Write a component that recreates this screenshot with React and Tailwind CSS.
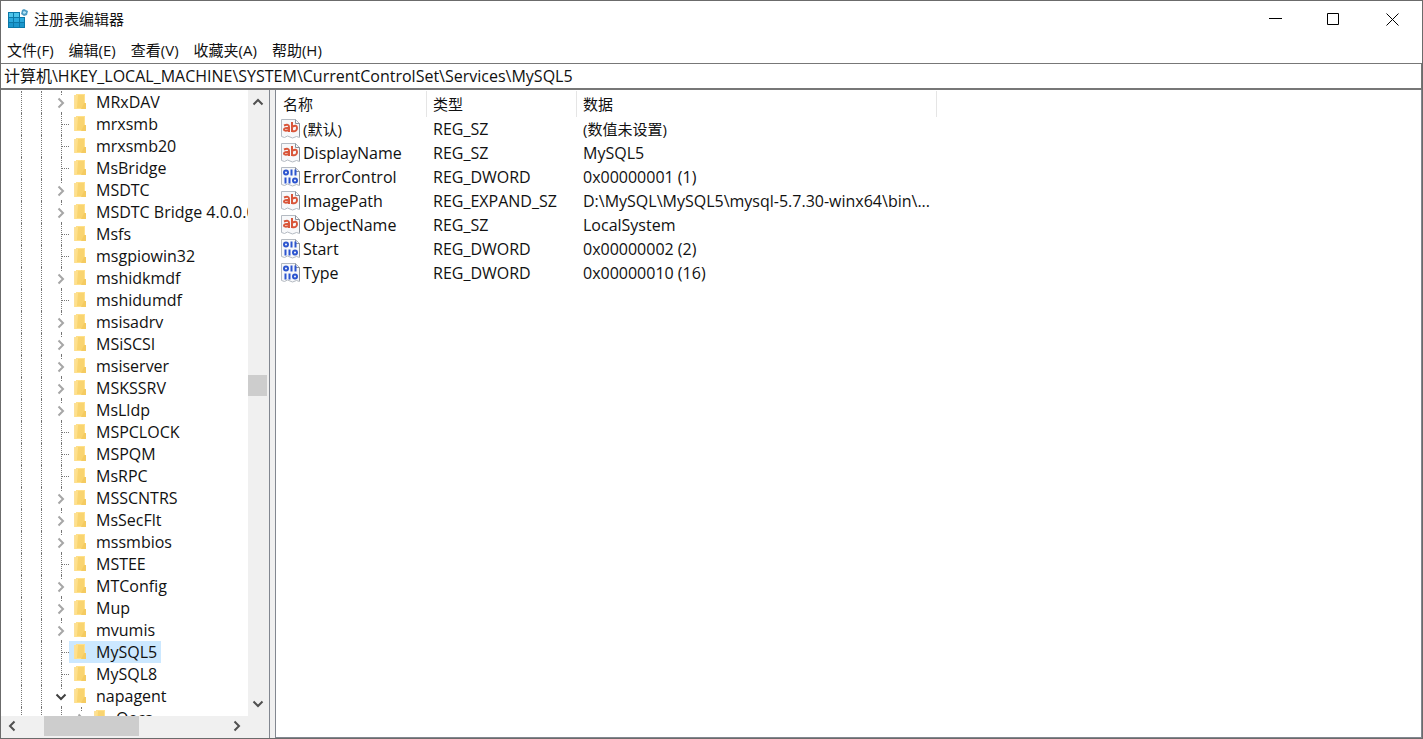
import React, { useState } from 'react';

const services = [
  { name: 'MRxDAV', state: 'closed' },
  { name: 'mrxsmb' },
  { name: 'mrxsmb20' },
  { name: 'MsBridge' },
  { name: 'MSDTC', state: 'closed' },
  { name: 'MSDTC Bridge 4.0.0.0', state: 'closed' },
  { name: 'Msfs' },
  { name: 'msgpiowin32' },
  { name: 'mshidkmdf', state: 'closed' },
  { name: 'mshidumdf' },
  { name: 'msisadrv', state: 'closed' },
  { name: 'MSiSCSI', state: 'closed' },
  { name: 'msiserver', state: 'closed' },
  { name: 'MSKSSRV', state: 'closed' },
  { name: 'MsLldp', state: 'closed' },
  { name: 'MSPCLOCK' },
  { name: 'MSPQM' },
  { name: 'MsRPC' },
  { name: 'MSSCNTRS', state: 'closed' },
  { name: 'MsSecFlt', state: 'closed' },
  { name: 'mssmbios', state: 'closed' },
  { name: 'MSTEE' },
  { name: 'MTConfig', state: 'closed' },
  { name: 'Mup', state: 'closed' },
  { name: 'mvumis', state: 'closed' },
  { name: 'MySQL5' },
  { name: 'MySQL8' },
  { name: 'napagent', state: 'open' },
  { name: 'Qecs', child: true, state: 'closed' },
];

const values = [
  { name: '(默认)', type: 'REG_SZ', data: '(数值未设置)', unset: true },
  { name: 'DisplayName', type: 'REG_SZ', data: 'MySQL5' },
  { name: 'ErrorControl', type: 'REG_DWORD', data: '0x00000001 (1)' },
  { name: 'ImagePath', type: 'REG_EXPAND_SZ', data: 'D:\\MySQL\\MySQL5\\mysql-5.7.30-winx64\\bin\\...' },
  { name: 'ObjectName', type: 'REG_SZ', data: 'LocalSystem' },
  { name: 'Start', type: 'REG_DWORD', data: '0x00000002 (2)' },
  { name: 'Type', type: 'REG_DWORD', data: '0x00000010 (16)' },
];

const menus = ['文件(F)', '编辑(E)', '查看(V)', '收藏夹(A)', '帮助(H)'];

function RegeditIcon() {
  return (
    <svg width="20" height="20" viewBox="0 0 20 20" aria-hidden="true">
      <path d="M0 3h12v5h5v11H0z" fill="#0b78a8" />
      <path d="M1 4h4v4H1zM6 4h5v4H6z" fill="#4cc4ea" />
      <path d="M1 9h4v4H1zM6 9h5v4H6zM12 9h4v4h-4z" fill="#2ba9dc" />
      <path d="M1 14h4v4H1zM6 14h5v4H6zM12 14h4v4h-4z" fill="#1a96cc" />
      <path d="M16 0l4 2-1 4-3 1-3-2 1-4z" fill="#4b9cc4" />
      <path d="M16 2l2 1v1l-2 1-1-1v-1z" fill="#b5e4f6" />
    </svg>
  );
}

function FolderIcon() {
  return (
    <svg width="20" height="18" viewBox="0 0 20 18" aria-hidden="true">
      <path d="M1 2h3v14H1z" fill="#fbe09a" />
      <path d="M3 1h9v15H2z" fill="#ffe08a" />
      <path d="M5 2h6v9l-2 4H4z" fill="#f9d470" />
      <path d="M11 10h2v6H8z" fill="#f5cb61" />
    </svg>
  );
}

function ValueIcon({ binary }) {
  return (
    <svg width="20" height="20" viewBox="0 0 20 20" className="shrink-0" aria-hidden="true">
      <path d="M.5.5h14l4 4v14l-3-1-4 1.500-5-2-3 1.500-3-1z" fill="#f7f8fa" stroke="#b4bac2" />
      <path d="M14.500.5v4h4v13" fill="none" stroke="#8c939c" />
      {binary ? (
        <g fill="none" stroke="#2c55cf" strokeWidth="2">
          <ellipse cx="5" cy="5.500" rx="2" ry="2" />
          <path d="M10.500 2.500v6M14.500 2.500v6M4.500 10.500v6M8.500 10.500v6" />
          <ellipse cx="14" cy="13.500" rx="2" ry="2" />
        </g>
      ) : (
        <g fill="none" stroke="#d9563a" strokeWidth="2">
          <path d="M3 6.500q5-2 5 1.500v5M8 9q-5-.5-5 1.500t5 .5M11 3v10M11 8q5-3 5 1t-5 3" />
        </g>
      )}
    </svg>
  );
}

function Chevron({ direction, className }) {
  const paths = {
    up: 'M1.500 8.500L6 4l4.500 4.500',
    down: 'M1.500 3.500L6 8l4.500-4.500',
    left: 'M8.500 1.500L4 6l4.500 4.500',
    right: 'M3.500 1.500L8 6l-4.500 4.500',
  };
  return (
    <svg width="12" height="12" viewBox="0 0 12 12" className={className} aria-hidden="true">
      <path d={paths[direction]} fill="none" stroke="currentColor" strokeWidth="2" />
    </svg>
  );
}

function TreeRow({ item, selected, onSelect }) {
  return (
    <li className="flex h-[22px] whitespace-nowrap">
      <span className="ml-5 w-5 shrink-0 border-l border-dotted border-[#777]" />
      <span className={`${item.child ? 'w-5' : 'w-[10px]'} shrink-0 border-l border-dotted border-[#777]`} />
      {item.child && <span className="w-[10px] shrink-0 border-l border-dotted border-[#777]" />}
      <span className="relative w-[18px] shrink-0">
        <span className="absolute inset-y-0 left-[10px] border-l border-dotted border-[#777]" />
        {item.state ? (
          <button
            aria-label={item.state === 'open' ? '折叠' : '展开'}
            className="absolute left-1 top-1 flex h-4 w-3 items-center justify-center bg-white"
          >
            <Chevron
              direction={item.state === 'open' ? 'down' : 'right'}
              className={item.state === 'open' ? 'text-[#404040]' : 'text-[#a6a6a6]'}
            />
          </button>
        ) : (
          <span className="absolute left-[10px] right-0 top-[11px] border-t border-dotted border-[#777]" />
        )}
      </span>
      <button
        onClick={onSelect}
        className={`flex items-center gap-[3px] px-1 ${selected ? 'bg-[#cce8ff]' : ''}`}
      >
        <FolderIcon />
        {item.name}
      </button>
    </li>
  );
}

function TreePane() {
  const [selected, setSelected] = useState('MySQL5');

  return (
    <aside className="flex w-[269px] shrink-0 flex-col border-r border-[#828790] bg-[#f0f0f0] pb-[2px]">
      <div className="flex min-h-0 flex-1">
        <ul className="min-w-0 flex-1 overflow-hidden bg-white pt-px text-base leading-5">
          {services.map((item) => (
            <TreeRow
              key={item.name}
              item={item}
              selected={item.name === selected}
              onSelect={() => setSelected(item.name)}
            />
          ))}
        </ul>
        {/* Vertical scrollbar */}
        <div className="flex w-[21px] shrink-0 flex-col items-center py-[6px] pr-[2px] text-[#505050]">
          <button aria-label="向上滚动"><Chevron direction="up" /></button>
          <div className="flex w-full flex-1 flex-col">
            <div className="flex-[45]" />
            <div className="h-[21px] bg-[#cdcdcd]" />
            <div className="flex-[51]" />
          </div>
          <button aria-label="向下滚动"><Chevron direction="down" /></button>
        </div>
      </div>
      {/* Horizontal scrollbar */}
      <div className="mr-[21px] flex h-5 shrink-0 items-center px-[5px] text-[#505050]">
        <button aria-label="向左滚动"><Chevron direction="left" /></button>
        <div className="flex h-full flex-1">
          <div className="flex-[26]" />
          <div className="h-full w-[95px] bg-[#cdcdcd]" />
          <div className="flex-[92]" />
        </div>
        <button aria-label="向右滚动"><Chevron direction="right" /></button>
      </div>
    </aside>
  );
}

function ValueList() {
  return (
    <main className="min-w-0 flex-1 overflow-hidden border-x border-b border-[#828790] bg-white pt-px">
      <table className="w-full table-fixed border-separate border-spacing-0 text-left">
        <colgroup>
          <col className="w-[151px]" />
          <col className="w-[150px]" />
          <col className="w-[360px]" />
          <col />
        </colgroup>
        <thead>
          <tr className="h-[26px]">
            <th className="border-r border-[#e5e5e5] px-[7px] font-normal">名称</th>
            <th className="border-r border-[#e5e5e5] px-[6px] font-normal">类型</th>
            <th className="border-r border-[#e5e5e5] px-[6px] font-normal">数据</th>
            <th />
          </tr>
        </thead>
        <tbody className="text-base leading-5">
          {values.map((v) => (
            <tr key={v.name} className="h-6 whitespace-nowrap">
              <td className="pl-[5px]">
                <div className={`flex items-center gap-[2px] ${v.unset ? 'text-[15px]' : ''}`}>
                  <ValueIcon binary={v.type === 'REG_DWORD'} />
                  {v.name}
                </div>
              </td>
              <td className="px-[6px]">{v.type}</td>
              <td className={`px-[6px] ${v.unset ? 'text-[15px]' : ''}`}>{v.data}</td>
              <td />
            </tr>
          ))}
        </tbody>
      </table>
    </main>
  );
}

export default function App() {
  return (
    <div className="flex h-screen flex-col overflow-hidden border border-[#6b6b6b] bg-white font-['Open_Sans','Noto_Sans_CJK_SC',sans-serif] text-[15px] leading-5 text-[#111]">
      <header className="flex h-9 shrink-0 items-center pl-[7px]">
        <RegeditIcon />
        <h1 className="ml-[6px] flex-1">注册表编辑器</h1>
        <button aria-label="最小化" className="flex h-full w-[58px] items-center justify-center">
          <svg width="13" height="13" viewBox="0 0 13 13"><path d="M0 5.500h13" stroke="#000" /></svg>
        </button>
        <button aria-label="最大化" className="flex h-full w-[58px] items-center justify-center">
          <svg width="13" height="13" viewBox="0 0 13 13"><path d="M.5.500h11v11H.5z" fill="none" stroke="#000" /></svg>
        </button>
        <button aria-label="关闭" className="flex h-full w-[60px] items-center justify-center">
          <svg width="13" height="13" viewBox="0 0 13 13"><path d="M.5.500l12 12M12.500.500l-12 12" stroke="#000" /></svg>
        </button>
      </header>

      <nav className="flex h-[26px] shrink-0 items-center gap-[15px] px-[6px]">
        {menus.map((m) => (
          <button key={m}>{m}</button>
        ))}
      </nav>

      <input
        aria-label="地址"
        defaultValue="计算机\HKEY_LOCAL_MACHINE\SYSTEM\CurrentControlSet\Services\MySQL5"
        className="h-[27px] w-full shrink-0 border-b-2 border-r border-t border-[#777] bg-white px-[3px] pb-[2px] text-base leading-5 outline-none"
      />

      <div className="flex min-h-0 flex-1 bg-[#f0f0f0]">
        <TreePane />
        <div className="w-[5px] shrink-0" />
        <ValueList />
      </div>
    </div>
  );
}
